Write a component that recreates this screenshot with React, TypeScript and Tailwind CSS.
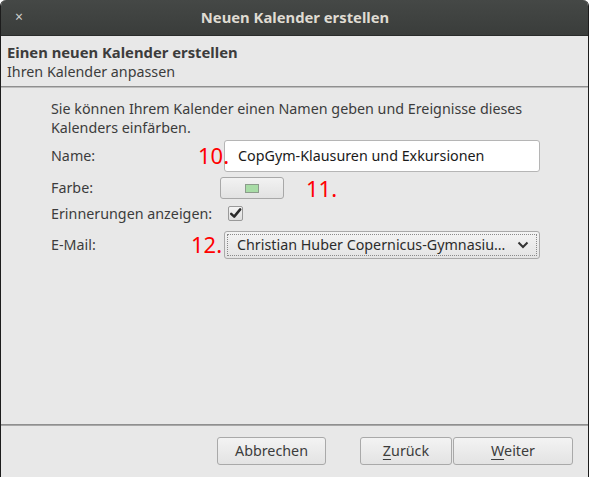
import React from "react";

const font = { fontFamily: '"Noto Sans", "DejaVu Sans", sans-serif' };

function Btn({ children, w }: { children: React.ReactNode; w: string }) {
  return (
    <div
      className={`${w} h-[28px] flex items-center justify-center rounded-[3px] border border-[#a9a9a9] bg-gradient-to-b from-[#f3f3f3] to-[#e3e3e3] text-[14.3px] text-[#3c3c3c]`}
    >
      {children}
    </div>
  );
}

export default function App() {
  return (
    <div
      style={font}
      className="w-[589px] h-[477px] bg-white overflow-hidden"
    >
      <div className="w-[589px] h-[477px] flex flex-col bg-[#e8e8e8] border-l border-r border-[#1c1c1c] rounded-t-[6px] overflow-hidden">
        {/* title bar */}
        <div className="h-[36px] shrink-0 bg-gradient-to-b from-[#454846] to-[#3a3d3b] flex items-center relative border-b border-[#2a2c2b]">
          <span className="absolute left-[14px] top-[8px] text-[#cfcfcf] text-[14px] leading-[18px]">×</span>
          <div className="flex-1 text-center text-[14.8px] font-bold text-[#dfdbd2] pl-[1px]">
            Neuen Kalender erstellen
          </div>
        </div>
        {/* header */}
        <div className="pt-[6px] px-[6px] h-[50px] shrink-0 text-[14.3px] leading-[20px] text-[#3c3c3c]">
          <div className="font-bold text-[14.8px]">Einen neuen Kalender erstellen</div>
          <div>Ihren Kalender anpassen</div>
        </div>
        <div className="h-[2px] shrink-0 border-t border-[#8f8f8f] bg-[#bdbdbd]" />
        {/* content */}
        <div className="flex-1 pl-[50px] pr-[40px] pt-[11px] text-[14.3px] text-[#3c3c3c]">
          <p className="leading-[19px]">
            Sie können Ihrem Kalender einen Namen geben und Ereignisse dieses
            Kalenders einfärben.
          </p>
          <div className="flex items-center h-[32px] mt-[3px] mr-[8px]">
            <div className="w-[173px]">Name:</div>
            <div className="relative flex-1 h-[32px] rounded-[3px] border border-[#b5b5b5] bg-white flex items-center pl-[13px] text-[#1a1a1a]">
              CopGym-Klausuren und Exkursionen
              <span className="absolute left-[-27px] top-[0px] text-[22px] leading-[28px] text-[#ff0000]">10.</span>
            </div>
          </div>
          <div className="flex items-center h-[22px] mt-[5px]">
            <div className="w-[169px]">Farbe:</div>
            <div className="relative w-[64px] h-[22px] rounded-[3px] border border-[#a8a8a8] bg-gradient-to-b from-[#f2f2f2] to-[#e2e2e2] flex items-center justify-center">
              <div className="w-[14px] h-[9px] bg-[#a8dca6] border border-[#8c9c8c]" />
              <span className="absolute left-[85px] top-[-4px] text-[22px] leading-[28px] text-[#ff0000]">11.</span>
            </div>
          </div>
          <div className="flex items-center h-[15px] mt-[7px]">
            <div className="w-[177px]">Erinnerungen anzeigen:</div>
            <div className="w-[15px] h-[15px] rounded-[2px] border border-[#999] bg-gradient-to-b from-[#f4f4f4] to-[#dedede] flex items-center justify-center">
              <svg width="13" height="13" viewBox="0 0 13 13">
                <path d="M2.2 6.8 L5.2 9.6 L11.2 2.4" fill="none" stroke="#2a2a2a" strokeWidth="2.5" strokeLinecap="round" strokeLinejoin="round" />
              </svg>
            </div>
          </div>
          <div className="flex items-center h-[28px] mt-[10px] mr-[8px]">
            <div className="w-[173px]">E-Mail:</div>
            <div className="relative flex-1 h-[28px] rounded-[3px] border border-[#a9a9a9] bg-gradient-to-b from-[#f3f3f3] to-[#e4e4e4] p-[2px]">
              <div className="h-full border border-dotted border-[#8a8a8a] flex items-center pl-[9px] pr-[7px]">
                <span className="flex-1 truncate text-[#2c2c2c]">Christian Huber Copernicus-Gymnasiu…</span>
                <svg width="12" height="8" viewBox="0 0 12 8" className="ml-[10px]">
                  <path d="M1.5 1.5 L6 6 L10.5 1.5" fill="none" stroke="#333" strokeWidth="2" />
                </svg>
              </div>
              <span className="absolute left-[-34px] top-[-2px] text-[22px] leading-[28px] text-[#ff0000]">12.</span>
            </div>
          </div>
        </div>
        <div className="h-[2px] shrink-0 border-t border-[#8f8f8f] bg-[#a8a8a8]" />
        {/* buttons */}
        <div className="h-[51px] shrink-0 flex items-start pt-[11px] pr-[15px] justify-end">
          <Btn w="w-[109px]">Abbrechen</Btn>
          <div className="w-[34px]" />
          <Btn w="w-[92px]">
            <span><span className="underline underline-offset-[3px]">Z</span>urück</span>
          </Btn>
          <div className="w-[1px]" />
          <Btn w="w-[120px]">
            <span><span className="underline underline-offset-[3px]">W</span>eiter</span>
          </Btn>
        </div>
      </div>
    </div>
  );
}
